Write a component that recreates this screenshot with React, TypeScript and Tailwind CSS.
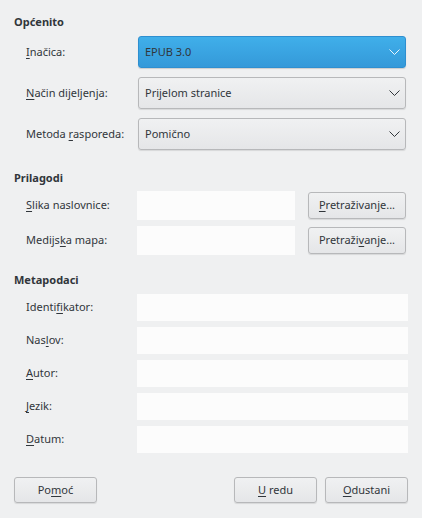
import React from 'react';

const font = { fontFamily: '"Noto Sans", "DejaVu Sans", sans-serif' };

// label text with one mnemonic letter underlined
const Mn: React.FC<{ pre: string; u: string; post: string }> = ({ pre, u, post }) => (
  <span>
    {pre}
    <span className="underline underline-offset-2">{u}</span>
    {post}
  </span>
);

const Chevron: React.FC<{ light?: boolean }> = ({ light }) => (
  <svg width="11" height="6" viewBox="0 0 11 6" className="shrink-0">
    <path d="M0.5 0.5 L5.5 5.5 L10.5 0.5" fill="none" stroke={light ? '#eaf5fc' : '#31363b'} strokeWidth="1" />
  </svg>
);

const Combo: React.FC<{ text: string; active?: boolean }> = ({ text, active }) => (
  <div
    className={
      active
        ? 'ml-px flex h-8 w-[268px] items-center justify-between rounded-[3px] border border-[#2e8fd0] bg-gradient-to-b from-[#40afea] to-[#3499d9] pl-[6px] pr-[5px] shadow-[0_1px_1px_rgba(0,0,0,0.15)]'
        : 'ml-px flex h-8 w-[268px] items-center justify-between rounded-[3px] border border-[#b7b8ba] bg-gradient-to-b from-[#f0f1f2] to-[#e5e6e8] pl-[6px] pr-[5px] shadow-[0_1px_1px_rgba(0,0,0,0.1)]'
    }
  >
    <span>{text}</span>
    <Chevron light={active} />
  </div>
);

const Button: React.FC<{ children: React.ReactNode; className?: string }> = ({ children, className }) => (
  <div
    className={`flex items-center justify-center rounded-[3px] border border-[#b7b8ba] bg-gradient-to-b from-[#f0f1f2] to-[#e5e6e8] shadow-[0_1px_1px_rgba(0,0,0,0.1)] ${className ?? ''}`}
  >
    {children}
  </div>
);

const Header: React.FC<{ title: string; className?: string }> = ({ title, className }) => (
  <div className={`flex h-4 items-center font-bold ${className ?? ''}`}>{title}</div>
);

const Label: React.FC<{ children: React.ReactNode }> = ({ children }) => (
  <div className="w-[123px] shrink-0 pl-3">{children}</div>
);

export default function App() {
  return (
    <div
      style={font}
      className="flex h-[518px] w-[422px] flex-col bg-[#eff0f1] pl-[14px] pt-[14px] text-[11px] text-[#31363b]"
    >
      <Header title="Općenito" />
      <div className="mt-[6px] flex flex-col gap-[9px]">
        <div className="flex items-center">
          <Label><Mn pre="" u="I" post="načica:" /></Label>
          <Combo text="EPUB 3.0" active />
        </div>
        <div className="flex items-center">
          <Label><Mn pre="" u="N" post="ačin dijeljenja:" /></Label>
          <Combo text="Prijelom stranice" />
        </div>
        <div className="flex items-center">
          <Label><Mn pre="Metoda " u="r" post="asporeda:" /></Label>
          <Combo text="Pomično" />
        </div>
      </div>

      <Header title="Prilagodi" className="mt-[20px]" />
      <div className="mt-[5px] flex flex-col gap-[6px]">
        <div className="flex h-[29px] items-center">
          <Label><Mn pre="" u="S" post="lika naslovnice:" /></Label>
          <div className="h-[29px] w-[158px] bg-[#fcfcfc]" />
          <Button className="ml-[13px] h-[27px] w-[98px]"><Mn pre="" u="P" post="retraživanje..." /></Button>
        </div>
        <div className="flex h-[29px] items-center">
          <Label><Mn pre="Medijs" u="k" post="a mapa:" /></Label>
          <div className="h-[29px] w-[158px] bg-[#fcfcfc]" />
          <Button className="ml-[13px] h-[27px] w-[98px]"><Mn pre="Pretraži" u="v" post="anje..." /></Button>
        </div>
      </div>

      <Header title="Metapodaci" className="mt-[17px]" />
      <div className="mt-[6px] flex flex-col gap-[6px]">
        {[
          ['Identi', 'fi', 'kator:'],
          ['Nas', 'l', 'ov:'],
          ['', 'A', 'utor:'],
          ['', 'J', 'ezik:'],
          ['', 'D', 'atum:'],
        ].map(([a, b, c]) => (
          <div key={a + b + c} className="flex h-[27px] items-center">
            <Label><Mn pre={a} u={b} post={c} /></Label>
            <div className="h-[27px] w-[271px] bg-[#fcfcfc]" />
          </div>
        ))}
      </div>

      <div className="mt-[24px] flex w-[394px] items-center">
        <Button className="h-[26px] w-[83px]"><Mn pre="Po" u="m" post="oć" /></Button>
        <div className="flex-1" />
        <Button className="h-[26px] w-[83px]"><Mn pre="" u="U" post=" redu" /></Button>
        <Button className="ml-[8px] h-[26px] w-[83px]"><Mn pre="" u="O" post="dustani" /></Button>
      </div>
    </div>
  );
}
